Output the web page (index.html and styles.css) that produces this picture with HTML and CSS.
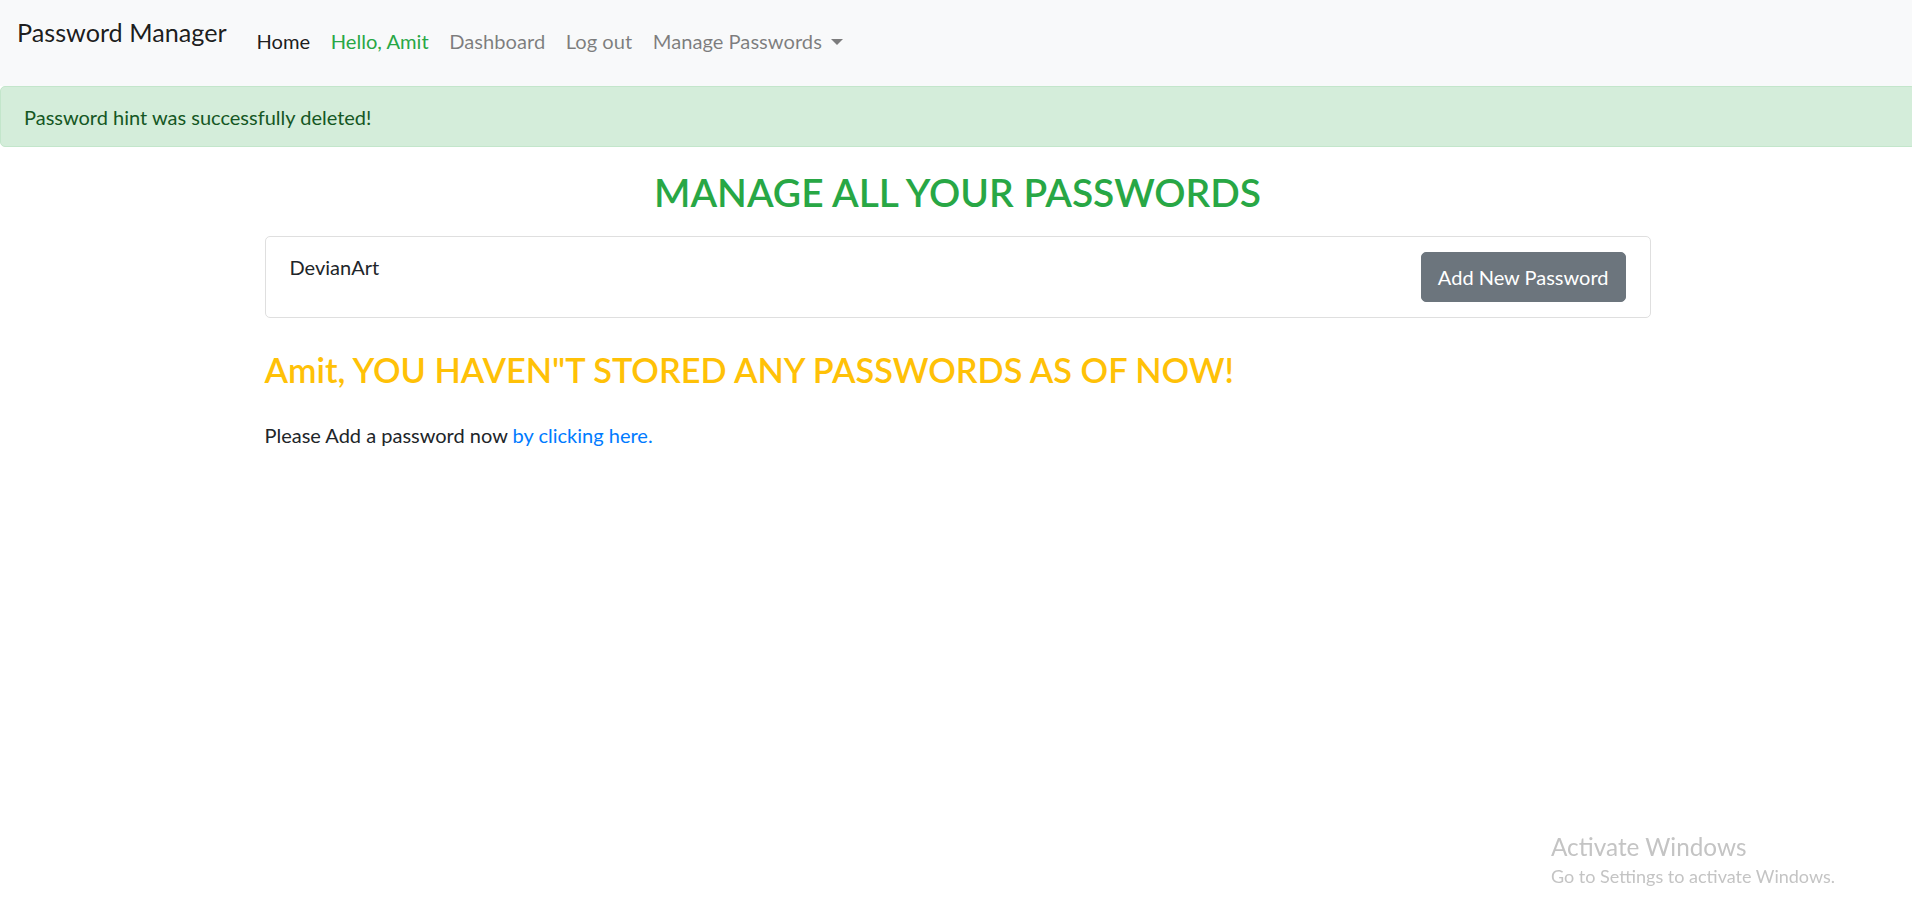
FILE: index.html
```html
<!DOCTYPE html>
<html lang="en">
<head>
<meta charset="utf-8">
<title>Password Manager</title>
<link rel="stylesheet" href="styles.css">
</head>
<body>
<nav class="navbar">
  <a class="brand" href="#">Password Manager</a>
  <ul class="nav">
    <li><a class="nav-link active" href="#">Home</a></li>
    <li><a class="nav-link greeting" href="#">Hello, Amit</a></li>
    <li><a class="nav-link" href="#">Dashboard</a></li>
    <li><a class="nav-link" href="#">Log out</a></li>
    <li><a class="nav-link dropdown-toggle" href="#">Manage Passwords<span class="caret"></span></a></li>
  </ul>
</nav>
<div class="alert">Password hint was successfully deleted!</div>
<main class="container">
  <h2 class="title">MANAGE ALL YOUR PASSWORDS</h2>
  <div class="card">
    <div class="card-name">DevianArt</div>
    <a class="btn" href="#">Add New Password</a>
  </div>
  <h3 class="warning">Amit, YOU HAVEN"T STORED ANY PASSWORDS AS OF NOW!</h3>
  <p class="note">Please Add a password now <a class="link" href="#">by clicking here.</a></p>
</main>
<div class="watermark">
  <div class="wm-title">Activate Windows</div>
  <div class="wm-sub">Go to Settings to activate Windows.</div>
</div>
</body>
</html>
```
FILE: styles.css
```css
* { box-sizing: border-box; }
html, body { margin: 0; padding: 0; }
html { overflow-x: hidden; }
body {
  font-family: "Lato", "Open Sans", sans-serif;
  font-size: 20px;
  line-height: 30px;
  color: #212529;
  background: #fff;
}
a { text-decoration: none; }

.navbar {
  display: flex;
  align-items: flex-start;
  height: 86px;
  padding: 14px 17px 0;
  background: #f8f9fa;
}
.brand {
  font-size: 25.2px;
  line-height: 37.5px;
  color: rgba(0, 0, 0, 0.9);
  margin-right: 19.5px;
}
.nav {
  display: flex;
  list-style: none;
  margin: 12px 0 0;
  padding: 0;
}
.nav-link {
  display: block;
  padding: 0 10.3px;
  font-size: 20.15px;
  color: rgba(0, 0, 0, 0.5);
  line-height: 30px;
}
.nav-link.active { color: rgba(0, 0, 0, 0.9); }
.nav-link.greeting { color: #28a745; }
.caret {
  display: inline-block;
  margin-left: 9px;
  vertical-align: 0.2em;
  border-top: 6px solid rgba(0, 0, 0, 0.5);
  border-left: 6px solid transparent;
  border-right: 6px solid transparent;
}

.alert {
  margin-right: -4px;
  padding: 15px 23px 14px;
  background: #d4edda;
  border: 1px solid #c3e6cb;
  border-radius: 5px;
  color: #155724;
  margin-bottom: 22px;
}

.container {
  max-width: 1389px;
  margin: 0 auto;
  padding-left: 3px;
}
.title {
  margin: 0 0 20px;
  text-align: center;
  color: #28a745;
  font-size: 38.9px;
  line-height: 1.2;
  font-weight: 600;
}
.card {
  display: flex;
  justify-content: space-between;
  align-items: flex-start;
  padding: 15px 24px;
  border: 1px solid #dfdfdf;
  border-radius: 5px;
}
.card-name { line-height: 30px; }
.btn {
  display: inline-block;
  padding: 9px 16px;
  line-height: 30px;
  color: #fff;
  background: #6c757d;
  border: 1px solid #6c757d;
  border-radius: 5px;
}
.warning {
  margin: 31px 0 30px;
  color: #ffc107;
  font-size: 34.3px;
  line-height: 1.2;
  font-weight: 600;
}
.note { margin: 0; }
.link { color: #007bff; }

.watermark {
  position: fixed;
  left: 1551px;
  top: 832px;
  color: #c4c4c4;
  pointer-events: none;
}
.wm-title { font-size: 24.3px; line-height: 30px; }
.wm-sub { font-size: 18px; line-height: 24px; margin-top: 2px; }
```
